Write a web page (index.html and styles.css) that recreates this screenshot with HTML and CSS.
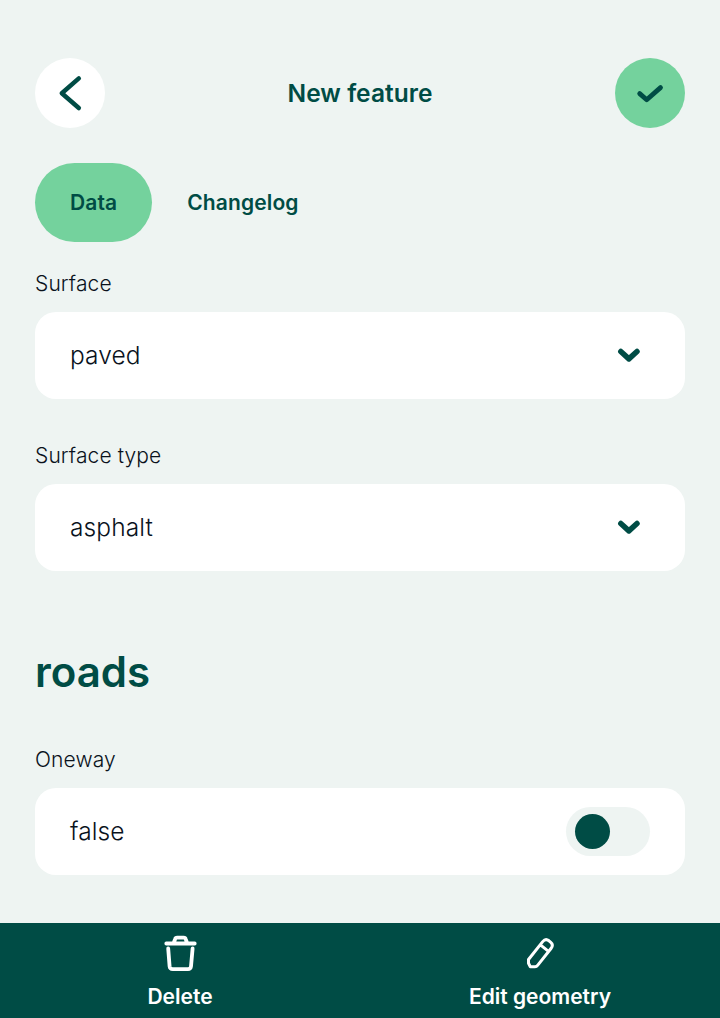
FILE: index.html
```html
<!DOCTYPE html>
<html lang="en">
<head>
<meta charset="utf-8">
<title>New feature</title>
<link rel="stylesheet" href="styles.css">
</head>
<body>
<div class="screen">
  <header class="header">
    <button class="round-button" aria-label="Back">
      <svg class="icon" viewBox="0 0 70 70"><path d="M43.8 20.4 26.8 35.2 43.8 50" stroke-width="4.5"/></svg>
    </button>
    <h1 class="title">New feature</h1>
    <button class="round-button round-button--accent" aria-label="Save">
      <svg class="icon" viewBox="0 0 70 70"><path d="M24.7 35.6 31.7 41.8 45.5 29.6" stroke-width="4.8"/></svg>
    </button>
  </header>
  <nav class="tabs">
    <button class="tab tab--active">Data</button>
    <button class="tab">Changelog</button>
  </nav>
  <main class="form">
    <section class="field">
      <div class="label">Surface</div>
      <div class="input"><span>paved</span>
        <svg class="chevron" viewBox="0 0 24 16"><path d="M3.8 4.5 11.9 11.9 20 4.5" stroke-width="5.5"/></svg>
      </div>
    </section>
    <section class="field">
      <div class="label">Surface type</div>
      <div class="input"><span>asphalt</span>
        <svg class="chevron" viewBox="0 0 24 16"><path d="M3.8 4.5 11.9 11.9 20 4.5" stroke-width="5.5"/></svg>
      </div>
    </section>
    <h2 class="group-title">roads</h2>
    <section class="field">
      <div class="label">Oneway</div>
      <div class="input"><span>false</span><div class="switch"><div class="knob"></div></div></div>
    </section>
  </main>
  <footer class="toolbar">
    <button class="action">
      <svg class="action-icon" viewBox="0 0 40 40"><path d="M6.3 10.5H34.7M13.7 10 15 6.3Q15.4 4.7 17.2 4.7H23.6Q25.4 4.7 25.8 6.3L27.1 10M8.2 15.5 9.6 33.4Q9.9 36.2 12.8 36.2H28Q30.7 36.2 31 33.4L32.6 15.5" stroke-width="3.8"/></svg>
      <span>Delete</span>
    </button>
    <button class="action">
      <svg class="action-icon" viewBox="0 0 40 40"><path d="M8.5 26.5 22.7 8.6Q25.6 5.2 29 7.8L30.8 9.3Q33.8 11.9 31 15.5L17.6 32.4Q16.6 33.7 15 33.7H10.3L8.5 30.2ZM20.4 11.9 28.2 18.2" stroke-width="3"/></svg>
      <span>Edit geometry</span>
    </button>
  </footer>
</div>
</body>
</html>
```

FILE: styles.css
```css
* { box-sizing: border-box; }
body { margin: 0; font-family: Inter, sans-serif; background: #eef4f2; color: #0a121c; }
button { font: inherit; color: inherit; border: 0; padding: 0; background: none; }
svg { fill: none; stroke: currentColor; stroke-linecap: round; stroke-linejoin: round; display: block; }
.screen { height: 1018px; display: flex; flex-direction: column; overflow: hidden; }
.header { display: flex; align-items: center; justify-content: space-between; padding: 58px 35px 0; color: #004c45; }
.round-button { width: 70px; height: 70px; border-radius: 50%; background: #fff; }
.round-button--accent { background: #74d29d; }
.icon { width: 70px; height: 70px; }
.title { margin: 0; font-size: 24.5px; line-height: 30px; font-weight: 590; letter-spacing: 0.03px; }
.tabs { display: flex; margin: 35px 35px 0; color: #004c45; }
.tab { height: 78.5px; padding: 0 35px; border-radius: 40px; font-size: 21px; font-weight: 590; letter-spacing: 0.12px; }
.tab--active { background: #74d29d; }
.form { flex: 1; padding: 29px 35px 0; }
.field { margin-bottom: 44px; }
.label { font-size: 21px; line-height: 26px; font-weight: 330; letter-spacing: 0.12px; margin-bottom: 15px; }
.input { height: 87px; padding: 0 35px; border-radius: 21px; background: #fff; display: flex; align-items: center; justify-content: space-between; font-size: 24.5px; line-height: 30px; font-weight: 330; letter-spacing: 0.1px; }
.chevron { width: 24px; height: 16px; margin-right: 9px; color: #004c45; }
.group-title { margin: 74px 0 48px; font-size: 42px; line-height: 54px; font-weight: 600; color: #004c45; }
.switch { width: 84px; height: 49px; border-radius: 25px; background: #eef4f2; padding: 7px 8.5px; }
.knob { width: 35px; height: 35px; border-radius: 50%; background: #004c45; }
.toolbar { height: 95px; display: flex; background: #004c45; color: #fff; }
.action { flex: 1; display: flex; flex-direction: column; align-items: center; padding-top: 10px; font-size: 21px; line-height: 26px; font-weight: 600; }
.action-icon { width: 40px; height: 40px; margin-bottom: 11px; }
```
